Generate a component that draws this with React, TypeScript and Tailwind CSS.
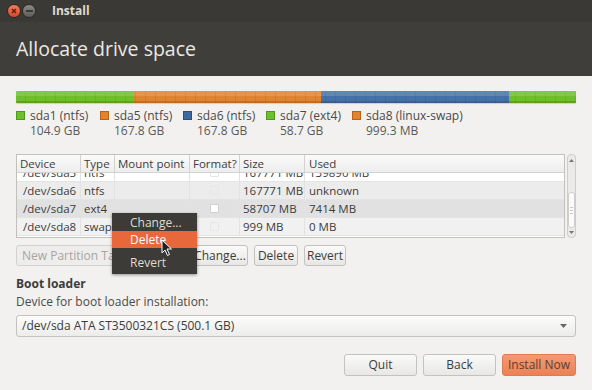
import React from 'react';

const font = { fontFamily: '"Open Sans", "Noto Sans", sans-serif' };

const segments = [
  { size: 104.9, color: 'bg-[#6fbf2c]' },
  { size: 167.8, color: 'bg-[#e2832d]' },
  { size: 167.8, color: 'bg-[#4572a8]' },
  { size: 58.7, color: 'bg-[#6fbf2c]' },
  { size: 1.0, color: 'bg-[#e2832d]' },
];

const legend = [
  { name: 'sda1 (ntfs)', size: '104.9 GB', color: 'bg-[#6fbf2c] border-[#4e9a1a]', w: 'w-[84px]' },
  { name: 'sda5 (ntfs)', size: '167.8 GB', color: 'bg-[#e2832d] border-[#b8621a]', w: 'w-[83px]' },
  { name: 'sda6 (ntfs)', size: '167.8 GB', color: 'bg-[#3d6aa3] border-[#284f80]', w: 'w-[83px]' },
  { name: 'sda7 (ext4)', size: '58.7 GB', color: 'bg-[#6fbf2c] border-[#4e9a1a]', w: 'w-[86px]' },
  { name: 'sda8 (linux-swap)', size: '999.3 MB', color: 'bg-[#e2832d] border-[#b8621a]', w: 'w-[120px]' },
];

const rows = [
  { dev: '/dev/sda5', type: 'ntfs', size: '167771 MB', used: '139890 MB', bg: 'bg-white', partial: true },
  { dev: '/dev/sda6', type: 'ntfs', size: '167771 MB', used: 'unknown', bg: 'bg-[#ececec]' },
  { dev: '/dev/sda7', type: 'ext4', size: '58707 MB', used: '7414 MB', bg: 'bg-[#e1e1e1]', check: true },
  { dev: '/dev/sda8', type: 'swap', size: '999 MB', used: '0 MB', bg: 'bg-[#f1f1f1]' },
];

const cols = ['w-[64px]', 'w-[34px]', 'w-[75px]', 'w-[50px]', 'w-[65px]'];

const Btn = ({ children, className = '' }: { children: React.ReactNode; className?: string }) => (
  <div
    className={`h-[21px] px-[5px] flex items-center justify-center whitespace-nowrap overflow-hidden rounded-[3px] border border-[#c4c2bf] bg-gradient-to-b from-[#fafafa] to-[#e8e7e5] text-[12px] text-[#3c3c3c] ${className}`}
  >
    {children}
  </div>
);

const App = () => {
  const total = segments.reduce((a, s) => a + s.size, 0);

  return (
    <div style={font} className="w-[592px] h-[390px] overflow-hidden bg-[#f2f1f0] flex flex-col">
      {/* title bar */}
      <div className="h-[22px] bg-[#3a3935] flex items-center pl-[7px]">
        <div className="w-[14px] h-[14px] rounded-full bg-gradient-to-b from-[#f37d5b] to-[#d5472b] border border-[#2c2b28] flex items-center justify-center">
          <svg width="8" height="8" viewBox="0 0 8 8">
            <path d="M2 2 L6 6 M6 2 L2 6" stroke="#5a1c10" strokeWidth="1.4" />
          </svg>
        </div>
        <div className="ml-[1px] w-[14px] h-[14px] rounded-full bg-gradient-to-b from-[#8d8b86] to-[#5e5c58] border border-[#2c2b28] flex items-center justify-center">
          <div className="w-[7px] h-[2px] bg-[#3a3935]" />
        </div>
        <span className="ml-[16px] text-[12px] font-bold text-[#dfdbd2]">Install</span>
      </div>

      {/* header */}
      <div className="h-[54px] bg-[#403e3a] flex items-center px-4">
        <h1 className="text-[19.5px] text-[#ebe9e4]">Allocate drive space</h1>
      </div>

      <div className="flex-1 px-4 pt-[15px] relative">
        {/* usage bar */}
        <div className="h-[12px] w-[560px] flex relative rounded-[1px] overflow-hidden shadow-[0_1px_1px_rgba(0,0,0,0.15)]">
          {segments.map((s, i) => (
            <div key={i} className={`${s.color} h-full`} style={{ width: `${(s.size / total) * 100}%` }} />
          ))}
          <div className="absolute inset-0 bg-[repeating-linear-gradient(90deg,transparent_0_9px,rgba(0,0,0,0.07)_9px_10px)]" />
          <div className="absolute inset-x-0 top-0 h-[5px] bg-white/15" />
          <div className="absolute inset-x-0 bottom-0 h-[2px] bg-black/15" />
        </div>

        {/* legend */}
        <div className="flex mt-[5px] text-[12px] leading-[15px]">
          {legend.map((l) => (
            <div key={l.name} className={`${l.w} flex`}>
              <div className={`w-[9px] h-[9px] mt-[3px] border ${l.color}`} />
              <div className="ml-[5px] text-[#4a4a4a] whitespace-nowrap">
                <div>{l.name}</div>
                <div className="text-[#5a5a5a]">{l.size}</div>
              </div>
            </div>
          ))}
        </div>

        {/* table */}
        <div className="mt-[16px] flex">
          <div className="w-[551px] h-[84px] border border-[#c2c0bc] bg-white overflow-hidden flex flex-col">
            <div className="h-[18px] flex shrink-0 bg-gradient-to-b from-[#fbfbfb] to-[#ededed] border-b border-[#d4d2cf] text-[11.5px] text-[#3c3c3c] leading-[17px] whitespace-nowrap">
              {['Device', 'Type', 'Mount point', 'Format?', 'Size'].map((h, i) => (
                <div key={h} className={`${cols[i]} pl-[3px] border-r border-[#d4d2cf] overflow-hidden`}>{h}</div>
              ))}
              <div className="flex-1 pl-[4px]">Used</div>
            </div>
            <div className="overflow-hidden">
              {rows.map((r) => (
                <div
                  key={r.dev}
                  className={`h-[18px] flex text-[11.5px] leading-[18px] text-[#3c3c3c] whitespace-nowrap ${r.bg} ${r.partial ? '-mt-[9px]' : ''} border-b border-[#e4e4e4]`}
                >
                  <div className={`${cols[0]} pl-[6px] border-r border-[#e2e2e2] overflow-hidden`}>{r.dev}</div>
                  <div className={`${cols[1]} pl-[3px] border-r border-[#e2e2e2] overflow-hidden`}>{r.type}</div>
                  <div className={`${cols[2]} border-r border-[#e2e2e2]`} />
                  <div className={`${cols[3]} flex items-center justify-center border-r border-[#e2e2e2]`}>
                    <div
                      className={`w-[9px] h-[9px] rounded-[1px] border ${r.check ? 'bg-white border-[#d0d0d0]' : 'border-[#e6e6e6]'}`}
                    />
                  </div>
                  <div className={`${cols[4]} pl-[3px] border-r border-[#e2e2e2] overflow-hidden`}>{r.size}</div>
                  <div className="flex-1 pl-[4px]">{r.used}</div>
                </div>
              ))}
            </div>
          </div>
          {/* scrollbar */}
          <div className="ml-[2px] w-[9px] h-[84px] rounded-[4px] border border-[#cfcdca] bg-[#ebeae8] flex flex-col items-center">
            <svg width="7" height="8" viewBox="0 0 7 8" className="mt-[2px]">
              <path d="M1 5 L3.5 2 L6 5 Z" fill="#777" />
            </svg>
            <div className="mt-[27px] w-[7px] h-[36px] rounded-[3px] bg-[#fbfbfb] border border-[#d0cecb] flex flex-col items-center justify-center gap-[2px]">
              <div className="w-[3px] h-px bg-[#c8c8c8]" />
              <div className="w-[3px] h-px bg-[#c8c8c8]" />
              <div className="w-[3px] h-px bg-[#c8c8c8]" />
            </div>
            <svg width="7" height="8" viewBox="0 0 7 8" className="mt-auto mb-[1px]">
              <path d="M1 3 L3.5 6 L6 3 Z" fill="#777" />
            </svg>
          </div>
        </div>

        {/* partition buttons */}
        <div className="mt-[7px] flex gap-[6px]">
          <Btn className="w-[124px] text-[#a6a5a2] justify-start bg-none bg-[#eeedeb] border-[#d4d2cf]">New Partition Table...</Btn>
          <Btn className="w-[40px]">Add...</Btn>
          <Btn className="w-[56px]">Change...</Btn>
          <Btn className="w-[44px]">Delete</Btn>
          <Btn className="w-[42px]">Revert</Btn>
        </div>

        {/* boot loader */}
        <div className="mt-[10px] text-[12px] font-bold text-[#3c3c3c] leading-[16px]">Boot loader</div>
        <div className="mt-[2px] text-[12px] text-[#4a4a4a] leading-[16px]">Device for boot loader installation:</div>
        <div className="mt-[5px] h-[22px] w-[560px] rounded-[3px] border border-[#c4c2bf] bg-gradient-to-b from-[#fcfcfc] to-[#ececeb] flex items-center pl-[5px] pr-[8px] text-[12px] text-[#3c3c3c]">
          <span>/dev/sda ATA ST3500321CS (500.1 GB)</span>
          <svg width="7" height="5" viewBox="0 0 7 5" className="ml-auto">
            <path d="M0 0 L7 0 L3.5 4 Z" fill="#666" />
          </svg>
        </div>

        {/* footer buttons */}
        <div className="mt-[17px] flex justify-end gap-[6px]">
          <Btn className="w-[73px] h-[22px]">Quit</Btn>
          <Btn className="w-[73px] h-[22px]">Back</Btn>
          <div className="w-[74px] h-[22px] rounded-[3px] border border-[#e07a50] bg-gradient-to-b from-[#f49a70] to-[#ec8157] flex items-center justify-center text-[12px] text-[#5a3f33]">
            Install Now
          </div>
        </div>

        {/* context menu */}
        <div className="absolute left-[112px] top-[137px] w-[85px] h-[61px] bg-[#3c3b37] shadow-[0_1px_3px_rgba(0,0,0,0.4)] text-[12px] text-[#dfdbd2]">
          <div className="h-[17px] mt-[1px] leading-[17px] pl-[18px]">Change...</div>
          <div className="h-[17px] leading-[17px] pl-[18px] bg-[#e9683b] text-white">Delete</div>
          <div className="h-[6px]" />
          <div className="h-[17px] leading-[17px] pl-[18px]">Revert</div>
        </div>

        {/* cursor */}
        <svg width="12" height="18" viewBox="0 0 12 18" className="absolute left-[161px] top-[163px]">
          <path d="M1 1 L1 14 L4 11 L6.5 16.5 L8.5 15.5 L6 10 L10.5 10 Z" fill="#222" stroke="#fff" strokeWidth="1" />
        </svg>
      </div>
    </div>
  );
};

export default App;
